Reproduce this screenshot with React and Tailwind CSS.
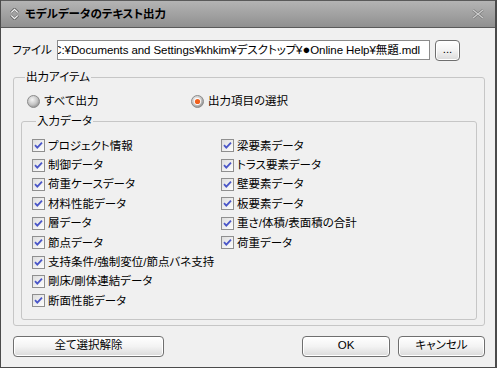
import React from 'react';

const leftItems = [
  'プロジェクト情報',
  '制御データ',
  '荷重ケースデータ',
  '材料性能データ',
  '層データ',
  '節点データ',
  '支持条件/強制変位/節点バネ支持',
  '剛床/剛体連結データ',
  '断面性能データ',
];

const rightItems = [
  '梁要素データ',
  'トラス要素データ',
  '壁要素データ',
  '板要素データ',
  '重さ/体積/表面積の合計',
  '荷重データ',
];

function CheckBox() {
  return (
    <svg width="13" height="13" viewBox="0 0 13 13" className="shrink-0">
      <defs>
        <linearGradient id="cbg" x1="0" y1="0" x2="1" y2="1">
          <stop offset="0" stopColor="#dcdcdc" />
          <stop offset="1" stopColor="#ffffff" />
        </linearGradient>
      </defs>
      <rect x="0.5" y="0.5" width="12" height="12" fill="url(#cbg)" stroke="#8f8f8f" />
      <path d="M3 6.2 L5.3 8.6 L10 3.6" fill="none" stroke="#4a56c8" strokeWidth="1.8" />
    </svg>
  );
}

function Radio({ checked }) {
  return (
    <svg width="13" height="13" viewBox="0 0 13 13" className="shrink-0">
      <defs>
        <radialGradient id={checked ? 'rg1' : 'rg0'} cx="0.4" cy="0.35" r="0.7">
          <stop offset="0" stopColor="#f4f4f4" />
          <stop offset="0.6" stopColor="#c4c4c4" />
          <stop offset="1" stopColor="#8a8a8a" />
        </radialGradient>
      </defs>
      <circle cx="6.5" cy="6.5" r="6" fill={`url(#${checked ? 'rg1' : 'rg0'})`} stroke="#8c8c8c" />
      {checked && (
        <>
          <circle cx="6.5" cy="6.5" r="3.4" fill="#ffffff" />
          <circle cx="6.5" cy="6.5" r="2.6" fill="#f0601e" />
        </>
      )}
    </svg>
  );
}

function Check({ label }) {
  return (
    <div className="flex items-center gap-[3px] h-[19.4px]">
      <CheckBox />
      <span className="whitespace-nowrap">{label}</span>
    </div>
  );
}

function Btn({ children, className }) {
  return (
    <button
      className={
        'h-[21px] rounded-[4px] border border-[#6f6f6f] bg-gradient-to-b from-[#ffffff] via-[#f3f3f3] to-[#dadada] text-[11.5px] leading-none text-black shadow-[inset_0_0_0_1px_#ffffff] ' +
        className
      }
    >
      {children}
    </button>
  );
}

export default function App() {
  return (
    <div className="w-[497px] h-[368px] overflow-hidden flex flex-col border-l border-r-2 border-b border-[#4b4b4b] bg-[#f0f0f0] text-[11.5px] leading-[14px] text-black font-['Liberation_Sans','Noto_Sans_CJK_JP',sans-serif] [font-feature-settings:'palt']">
      {/* title bar */}
      <div className="h-[28px] shrink-0 flex items-center border-t border-b border-[#5a5a5a] bg-gradient-to-b from-[#b4b4b4] to-[#909090] pl-[9px] pr-[10px]">
        <svg width="9" height="12" viewBox="0 0 9 12" className="shrink-0">
          <path d="M1 4.5 L4.5 1 L8 4.5" fill="none" stroke="#666" strokeWidth="2.6" />
          <path d="M1 7.5 L4.5 11 L8 7.5" fill="none" stroke="#666" strokeWidth="2.6" />
          <path d="M1.3 4.5 L4.5 1.3 L7.7 4.5" fill="none" stroke="#f2f2f2" strokeWidth="1.2" />
          <path d="M1.3 7.5 L4.5 10.7 L7.7 7.5" fill="none" stroke="#f2f2f2" strokeWidth="1.2" />
        </svg>
        <span className="ml-[6px] font-bold text-[11.5px] text-black">モデルデータのテキスト出力</span>
        <svg width="12" height="10" viewBox="0 0 12 10" className="ml-auto mr-[1px]">
          <path d="M1 1 L11 9 M11 1 L1 9" stroke="#777" strokeWidth="2.4" />
          <path d="M1 1 L11 9 M11 1 L1 9" stroke="#cfcfcf" strokeWidth="1.2" />
        </svg>
      </div>

      {/* file row */}
      <div className="flex items-center mt-[12px] pl-[11px] h-[20px]">
        <span className="w-[45px] shrink-0 whitespace-nowrap">ファイル</span>
        <div className="w-[373px] h-[20px] border border-[#8c8c8c] bg-white flex items-center justify-end overflow-hidden whitespace-nowrap pr-[9px]">
          <span className="tracking-[-0.08px]">C:¥Documents and Settings¥khkim¥デスクトップ¥<span className="text-[13px] leading-none">●</span>Online Help¥無題.mdl</span>
        </div>
        <Btn className="w-[25px] ml-[5px] h-[20px]">...</Btn>
      </div>

      {/* output items group */}
      <fieldset className="mt-[10px] ml-[12px] w-[472px] border border-[#c6c6c6] rounded-[3px] px-[7px] pb-[5px]">
        <legend className="ml-[4px] px-[1px] leading-[14px]">出力アイテム</legend>
        <div className="flex items-center h-[16px] mt-[9px] pl-[6px]">
          <div className="flex items-center gap-[4px] w-[164px]">
            <Radio checked={false} />
            <span>すべて出力</span>
          </div>
          <div className="flex items-center gap-[4px]">
            <Radio checked />
            <span>出力項目の選択</span>
          </div>
        </div>

        <fieldset className="mt-[5px] border border-[#c6c6c6] rounded-[3px] pl-[10px] pb-[8px]">
          <legend className="ml-[4px] px-[1px] leading-[14px]">入力データ</legend>
          <div className="flex mt-[8px]">
            <div className="w-[189px] flex flex-col">
              {leftItems.map((t) => (
                <Check key={t} label={t} />
              ))}
            </div>
            <div className="flex flex-col">
              {rightItems.map((t) => (
                <Check key={t} label={t} />
              ))}
            </div>
          </div>
        </fieldset>
      </fieldset>

      {/* buttons */}
      <div className="flex items-center mt-[10px] pl-[12px]">
        <Btn className="w-[151px]">全て選択解除</Btn>
        <Btn className="w-[88px] ml-auto">OK</Btn>
        <Btn className="w-[87px] ml-[8px] mr-[10px]">キャンセル</Btn>
      </div>
    </div>
  );
}
